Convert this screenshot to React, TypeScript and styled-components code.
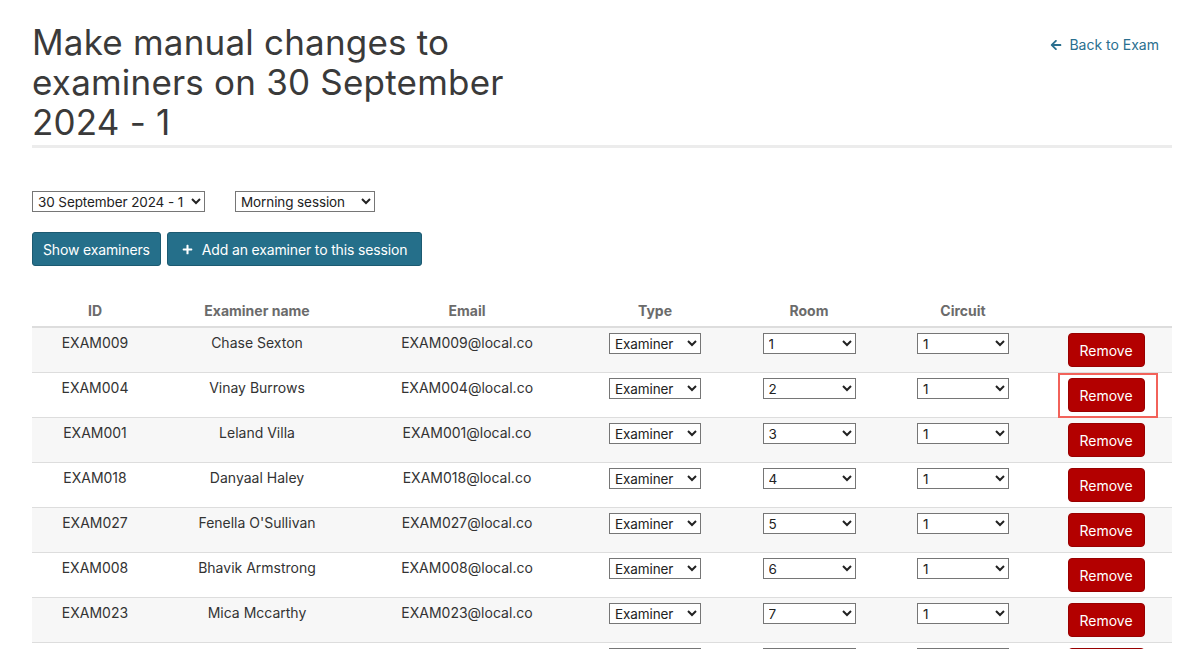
import React from "react";
import styled, { createGlobalStyle } from "styled-components";
import { FaArrowLeft, FaPlus } from "react-icons/fa";

const GlobalStyle = createGlobalStyle`
  html, body {
    margin: 0;
    padding: 0;
    background: #ffffff;
    overflow: hidden;
  }
  body {
    font-family: Inter, "Open Sans", "Liberation Sans", sans-serif;
    color: #333333;
    font-size: 14px;
  }
  * { box-sizing: border-box; }
`;

const Page = styled.div`
  padding: 0 14px 0 32px;
`;

const Header = styled.header`
  display: flex;
  justify-content: space-between;
  align-items: flex-start;
  padding-top: 22px;
`;

const Title = styled.h1`
  margin: 0;
  width: 530px;
  font-size: 35px;
  line-height: 40px;
  font-weight: 400;
  color: #3a3a3a;
  letter-spacing: 0.2px;
`;

const BackLink = styled.a`
  display: inline-flex;
  align-items: center;
  gap: 7px;
  margin-top: 14px;
  margin-right: 13px;
  color: #2a6f8f;
  text-decoration: none;
  font-size: 14px;
  line-height: 18px;
  svg {
    width: 12px;
    height: 12px;
  }
`;

const Rule = styled.hr`
  margin: 3px 0 0;
  border: 0;
  height: 3px;
  background: #ececec;
`;

const Filters = styled.div`
  display: flex;
  gap: 30px;
  margin-top: 43px;
`;

const Select = styled.select<{ $w: number }>`
  width: ${(p) => p.$w}px;
  height: 21px;
  font-family: inherit;
  font-size: 13.5px;
  letter-spacing: -0.1px;
  color: #222;
  background: #fff;
  border: 1px solid #767676;
  border-radius: 0;
  padding: 0 0 0 1px;
  vertical-align: top;
`;

const Actions = styled.div`
  display: flex;
  gap: 6px;
  margin-top: 20px;
`;

const PrimaryButton = styled.button<{ $pad: number }>`
  display: inline-flex;
  align-items: center;
  gap: 9px;
  height: 34px;
  padding: 0 ${(p) => p.$pad}px;
  background: #256f8a;
  color: #ffffff;
  border: 1px solid #1c5a71;
  border-radius: 3px;
  font-family: inherit;
  font-size: 14px;
  letter-spacing: -0.15px;
  cursor: pointer;
  svg {
    width: 11px;
    height: 11px;
  }
`;

const Table = styled.table`
  width: 100%;
  margin-top: 27px;
  border-collapse: collapse;
  table-layout: fixed;
`;

const HeadCell = styled.th`
  padding: 8px 8px 5px;
  line-height: 20px;
  font-size: 14px;
  font-weight: 700;
  color: #6b6b6b;
  text-align: center;
  border-bottom: 2px solid #dddddd;
`;

const Row = styled.tr<{ $striped: boolean }>`
  background: ${(p) => (p.$striped ? "#f7f7f7" : "#ffffff")};
`;

const Cell = styled.td`
  padding: 5px 8px 5px;
  line-height: 20px;
  text-align: center;
  vertical-align: top;
  color: #333333;
  border-bottom: 1px solid #dddddd;
`;

const RemoveWrap = styled.div`
  position: relative;
  width: fit-content;
  margin: 0 auto;
`;

const Highlight = styled.span`
  position: absolute;
  left: -10px;
  right: -13px;
  top: -5px;
  bottom: -6px;
  border: 2px solid #f2625a;
  pointer-events: none;
`;

const RemoveButton = styled.button`
  display: block;
  width: 77px;
  height: 34px;
  background: #b30000;
  color: #ffffff;
  border: 1px solid #980000;
  border-radius: 4px;
  font-family: inherit;
  font-size: 14px;
  cursor: pointer;
`;

type Examiner = { id: string; name: string; room: number };

const examiners: Examiner[] = [
  { id: "EXAM009", name: "Chase Sexton", room: 1 },
  { id: "EXAM004", name: "Vinay Burrows", room: 2 },
  { id: "EXAM001", name: "Leland Villa", room: 3 },
  { id: "EXAM018", name: "Danyaal Haley", room: 4 },
  { id: "EXAM027", name: "Fenella O'Sullivan", room: 5 },
  { id: "EXAM008", name: "Bhavik Armstrong", room: 6 },
  { id: "EXAM023", name: "Mica Mccarthy", room: 7 },
  { id: "EXAM012", name: "Tobias Whitfield", room: 8 },
  { id: "EXAM015", name: "Aisha Grant", room: 9 },
];

const columns = [
  { label: "ID", width: 126 },
  { label: "Examiner name", width: 198 },
  { label: "Email", width: 222 },
  { label: "Type", width: 154 },
  { label: "Room", width: 154 },
  { label: "Circuit", width: 154 },
  { label: "", width: 132 },
];

export default function App() {
  return (
    <>
      <GlobalStyle />
      <Page>
        <Header>
          <Title>Make manual changes to examiners on 30 September 2024 - 1</Title>
          <BackLink href="#">
            <FaArrowLeft />
            Back to Exam
          </BackLink>
        </Header>
        <Rule />

        <Filters>
          <Select $w={173} defaultValue="d1">
            <option value="d1">30 September 2024 - 1</option>
          </Select>
          <Select $w={140} defaultValue="am">
            <option value="am">Morning session</option>
            <option value="pm">Afternoon session</option>
          </Select>
        </Filters>

        <Actions>
          <PrimaryButton $pad={10}>Show examiners</PrimaryButton>
          <PrimaryButton $pad={14}>
            <FaPlus />
            Add an examiner to this session
          </PrimaryButton>
        </Actions>

        <Table>
          <colgroup>
            {columns.map((c, i) => (
              <col key={i} style={{ width: c.width }} />
            ))}
          </colgroup>
          <thead>
            <tr>
              {columns.map((c, i) => (
                <HeadCell key={i}>{c.label}</HeadCell>
              ))}
            </tr>
          </thead>
          <tbody>
            {examiners.map((ex, i) => (
              <Row key={ex.id} $striped={i % 2 === 0}>
                <Cell>{ex.id}</Cell>
                <Cell>{ex.name}</Cell>
                <Cell>{ex.id}@local.co</Cell>
                <Cell>
                  <Select $w={92} defaultValue="examiner">
                    <option value="examiner">Examiner</option>
                    <option value="observer">Observer</option>
                  </Select>
                </Cell>
                <Cell>
                  <Select $w={93} defaultValue={String(ex.room)}>
                    {Array.from({ length: 12 }, (_, n) => (
                      <option key={n} value={String(n + 1)}>
                        {n + 1}
                      </option>
                    ))}
                  </Select>
                </Cell>
                <Cell>
                  <Select $w={92} defaultValue="1">
                    <option value="1">1</option>
                    <option value="2">2</option>
                  </Select>
                </Cell>
                <Cell>
                  <RemoveWrap>
                    <RemoveButton>Remove</RemoveButton>
                    {i === 1 && <Highlight />}
                  </RemoveWrap>
                </Cell>
              </Row>
            ))}
          </tbody>
        </Table>
      </Page>
    </>
  );
}
